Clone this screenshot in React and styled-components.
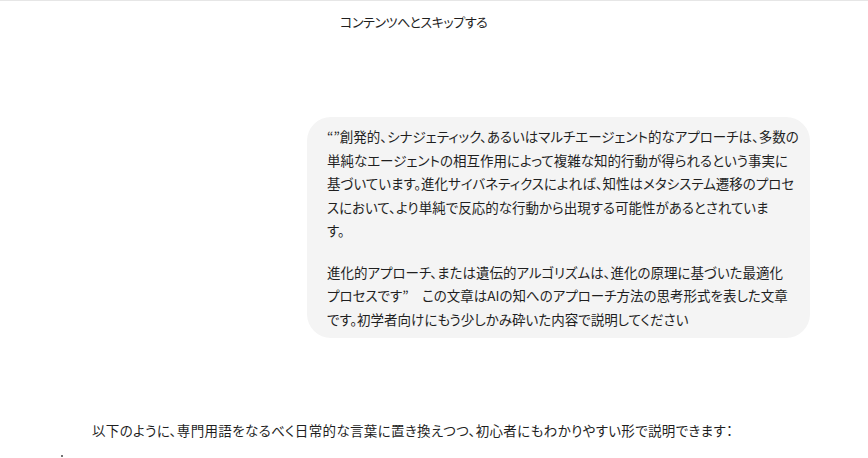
import React from "react";
import styled, { createGlobalStyle } from "styled-components";

const Global = createGlobalStyle`
  html, body { margin: 0; padding: 0; background: #ffffff; }
  body {
    font-family: "Noto Sans CJK JP", "Noto Sans", sans-serif;
    color: #1f1f1f;
    border-top: 1px solid #e6e6e6;
    overflow: hidden;
  }
`;

const Page = styled.div`
  display: flex;
  flex-direction: column;
  width: 868px;
  height: 457px;
`;

const SkipBar = styled.div`
  display: flex;
  justify-content: flex-start;
  padding: 11px 0 0 340px;
  height: 30px;
  box-sizing: border-box;
`;

const SkipLink = styled.a`
  font-size: 13px;
  line-height: 20px;
  color: #1f1f1f;
  text-decoration: none;
  font-feature-settings: "palt";
  letter-spacing: -0.4px;
`;

const Thread = styled.div`
  display: flex;
  flex-direction: column;
  padding-top: 86px;
`;

const UserRow = styled.div`
  display: flex;
  justify-content: flex-end;
  padding-right: 58px;
`;

const Bubble = styled.div`
  background: #f4f4f4;
  border-radius: 24px;
  width: 503px;
  box-sizing: border-box;
  padding: 8px 20px 7px 20px;
  font-size: 13.5px;
  line-height: 23.5px;
  font-feature-settings: "palt";
  letter-spacing: 0px;
  white-space: nowrap;
`;

const Para = styled.p`
  margin: 0;
  & + & { margin-top: 18px; }
`;

const AssistantRow = styled.div`
  padding: 80px 0 0 92px;
  font-size: 13.5px;
  line-height: 24px;
  font-feature-settings: "palt";
  letter-spacing: 0.35px;
  white-space: nowrap;
`;

const Bullet = styled.div`
  margin: 13px 0 0 61px;
  width: 2px;
  height: 2px;
  border-radius: 1px;
  background: #444;
`;

const p1 = [
  "“”創発的、シナジェティック、あるいはマルチエージェント的なアプローチは、多数の",
  "単純なエージェントの相互作用によって複雑な知的行動が得られるという事実に",
  "基づいています。進化サイバネティクスによれば、知性はメタシステム遷移のプロセ",
  "スにおいて、より単純で反応的な行動から出現する可能性があるとされていま",
  "す。",
];
const p2 = [
  "進化的アプローチ、または遺伝的アルゴリズムは、進化の原理に基づいた最適化",
  "プロセスです”　この文章はAIの知へのアプローチ方法の思考形式を表した文章",
  "です。初学者向けにもう少しかみ砕いた内容で説明してください",
];

const Lines = ({ lines }) =>
  lines.map((l, i) => (
    <React.Fragment key={i}>
      {l}
      {i < lines.length - 1 && <br />}
    </React.Fragment>
  ));

export default function App() {
  return (
    <>
      <Global />
      <Page>
        <SkipBar>
          <SkipLink href="#main">コンテンツへとスキップする</SkipLink>
        </SkipBar>
        <Thread>
          <UserRow>
            <Bubble>
              <Para><Lines lines={p1} /></Para>
              <Para><Lines lines={p2} /></Para>
            </Bubble>
          </UserRow>
          <AssistantRow>
            以下のように、専門用語をなるべく日常的な言葉に置き換えつつ、初心者にもわかりやすい形で説明できます：
          </AssistantRow>
          <Bullet />
        </Thread>
      </Page>
    </>
  );
}
